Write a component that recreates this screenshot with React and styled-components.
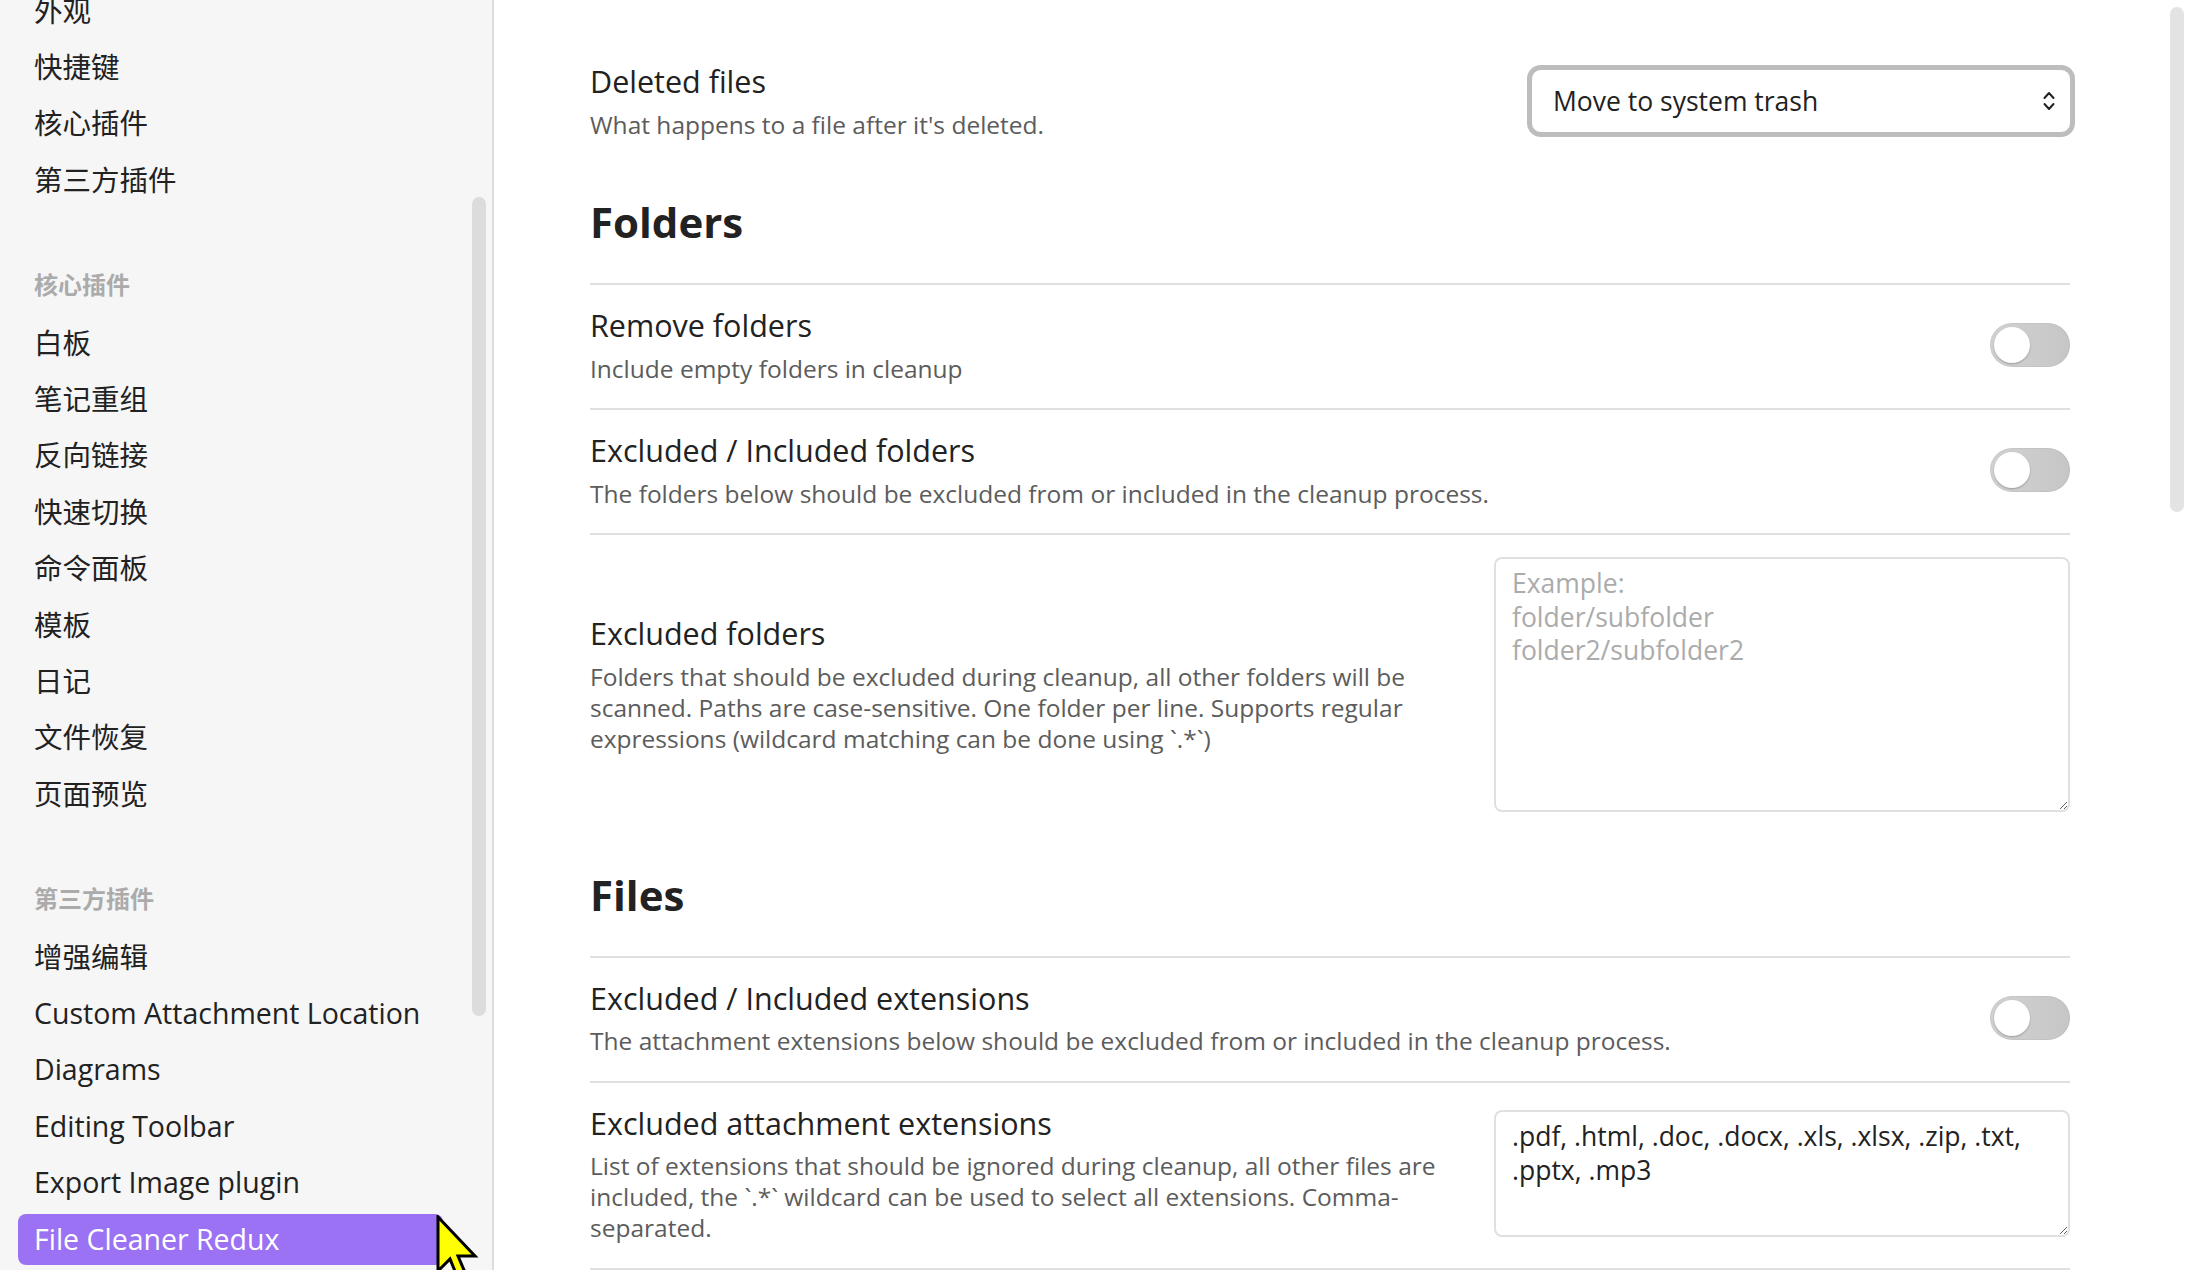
import styled, { createGlobalStyle } from "styled-components";

const GlobalStyle = createGlobalStyle`
  * { box-sizing: border-box; }
  html, body { margin: 0; padding: 0; height: 100%; overflow: hidden; }
  body {
    font-family: "Open Sans", "Noto Sans CJK SC", sans-serif;
    background: #ffffff;
    color: #222222;
  }
  #root { height: 100%; }
`;

const coreItems = ["外观", "快捷键", "核心插件", "第三方插件"];
const corePlugins = ["白板", "笔记重组", "反向链接", "快速切换", "命令面板", "模板", "日记", "文件恢复", "页面预览"];
const communityPlugins = ["增强编辑", "Custom Attachment Location", "Diagrams", "Editing Toolbar", "Export Image plugin", "File Cleaner Redux"];

export default function App() {
    return (
        <Window>
            <GlobalStyle />
            <Sidebar>
                <NavList>
                    {coreItems.map((name) => <NavItem key={name}>{name}</NavItem>)}
                    <GroupHeader>核心插件</GroupHeader>
                    {corePlugins.map((name) => <NavItem key={name}>{name}</NavItem>)}
                    <GroupHeader>第三方插件</GroupHeader>
                    {communityPlugins.map((name) => (
                        <NavItem key={name} $active={name === "File Cleaner Redux"}>{name}</NavItem>
                    ))}
                </NavList>
                <SideThumb />
            </Sidebar>

            <Main>
                <Content>
                    <SettingRow>
                        <Info>
                            <Title>Deleted files</Title>
                            <Desc>What happens to a file after it's deleted.</Desc>
                        </Info>
                        <Select>
                            <span>Move to system trash</span>
                            <svg width="14" height="24" viewBox="0 0 14 24" fill="none" stroke="#222" strokeWidth="2" strokeLinecap="round" strokeLinejoin="round">
                                <path d="M2.5 9 L7 4 L11.5 9" />
                                <path d="M2.5 15 L7 20 L11.5 15" />
                            </svg>
                        </Select>
                    </SettingRow>

                    <Heading>Folders</Heading>

                    <SettingRow $divider>
                        <Info>
                            <Title>Remove folders</Title>
                            <Desc>Include empty folders in cleanup</Desc>
                        </Info>
                        <Toggle><Knob /></Toggle>
                    </SettingRow>

                    <SettingRow $divider>
                        <Info>
                            <Title>Excluded / Included folders</Title>
                            <Desc>The folders below should be excluded from or included in the cleanup process.</Desc>
                        </Info>
                        <Toggle><Knob /></Toggle>
                    </SettingRow>

                    <SettingRow $divider>
                        <Info>
                            <Title>Excluded folders</Title>
                            <Desc>
                                Folders that should be excluded during cleanup, all other folders will be scanned. Paths are case-sensitive. One folder per line. Supports regular expressions (wildcard matching can be done using `.*`)
                            </Desc>
                        </Info>
                        <TextArea
                            $height={255}
                            readOnly
                            placeholder={"Example:\nfolder/subfolder\nfolder2/subfolder2"}
                        />
                    </SettingRow>

                    <Heading>Files</Heading>

                    <SettingRow $divider>
                        <Info>
                            <Title>Excluded / Included extensions</Title>
                            <Desc>The attachment extensions below should be excluded from or included in the cleanup process.</Desc>
                        </Info>
                        <Toggle><Knob /></Toggle>
                    </SettingRow>

                    <SettingRow $divider>
                        <Info>
                            <Title>Excluded attachment extensions</Title>
                            <Desc>
                                List of extensions that should be ignored during cleanup, all other files are included, the `.*` wildcard can be used to select all extensions. Comma-separated.
                            </Desc>
                        </Info>
                        <TextArea
                            $height={127}
                            readOnly
                            defaultValue=".pdf, .html, .doc, .docx, .xls, .xlsx, .zip, .txt, .pptx, .mp3"
                        />
                    </SettingRow>

                    <SettingRow $divider />
                </Content>
                <MainThumb />
            </Main>

            <Cursor width="44" height="70" viewBox="0 0 44 70">
                <path
                    d="M2 2 L2 56 L14 44 L23 66 L31 62 L22 41 L39 41 Z"
                    fill="#ffff00"
                    stroke="#000"
                    strokeWidth="3"
                    strokeLinejoin="miter"
                />
            </Cursor>
        </Window>
    );
}

const Window = styled.div`
    display: flex;
    height: 100vh;
    width: 100vw;
    overflow: hidden;
    position: relative;
`

const Sidebar = styled.aside`
    width: 494px;
    flex-shrink: 0;
    background: #f6f6f6;
    border-right: 2px solid #dddddd;
    position: relative;
    overflow: hidden;
`

const NavList = styled.nav`
    display: flex;
    flex-direction: column;
    margin-top: -14.5px;
`

const NavItem = styled.div`
    margin-left: 18px;
    margin-bottom: 5.4px;
    width: 425px;
    height: 51px;
    padding-left: 16px;
    border-radius: 8px;
    font-size: 28.5px;
    line-height: 51px;
    white-space: nowrap;
    color: ${(p) => (p.$active ? "#ffffff" : "#222222")};
    background: ${(p) => (p.$active ? "#9a72f3" : "transparent")};
`

const GroupHeader = styled.div`
    margin: 59px 0 17.5px 34px;
    font-size: 24px;
    line-height: 30px;
    font-weight: 700;
    color: #ababab;
`

const SideThumb = styled.div`
    position: absolute;
    top: 197px;
    right: 6px;
    width: 14px;
    height: 819px;
    border-radius: 7px;
    background: #dcdcdc;
`

const Main = styled.main`
    flex: 1;
    position: relative;
    background: #ffffff;
    overflow: hidden;
`

const Content = styled.div`
    padding: 39px 117px 0 96px;
`

const SettingRow = styled.div`
    display: flex;
    align-items: center;
    gap: 24px;
    border-top: 2px solid ${(p) => (p.$divider ? "#e0e0e0" : "transparent")};
    padding: 22px 0 24.5px;
`

const Info = styled.div`
    flex: 1;
    min-width: 0;
`

const Title = styled.div`
    font-size: 30.5px;
    line-height: 36px;
    color: #222222;
`

const Desc = styled.div`
    margin-top: 9.5px;
    font-size: 24.5px;
    line-height: 31px;
    color: #5c5c5c;
`

const Heading = styled.h3`
    margin: 0;
    padding: 33px 0 36px;
    font-size: 42px;
    line-height: 50px;
    font-weight: 700;
    color: #222222;
`

const Select = styled.div`
    flex-shrink: 0;
    width: 540px;
    height: 64px;
    margin-right: -1px;
    display: flex;
    align-items: center;
    justify-content: space-between;
    padding: 0 14px 0 21px;
    border: 1px solid #bdbdbd;
    box-shadow: 0 0 0 4px #bdbdbd;
    border-radius: 10px;
    background: #ffffff;
    font-size: 26.5px;
    color: #222222;
`

const Toggle = styled.div`
    flex-shrink: 0;
    width: 80px;
    height: 44px;
    border-radius: 22px;
    display: flex;
    align-items: center;
    padding-left: 4px;
    background: linear-gradient(90deg, #d2d2d2, #c6c6c6);
    box-shadow: inset 0 0 0 1px rgba(0, 0, 0, 0.04);
`

const Knob = styled.div`
    width: 36px;
    height: 36px;
    border-radius: 50%;
    background: #ffffff;
    box-shadow: 0 1px 2px rgba(0, 0, 0, 0.25);
`

const TextArea = styled.textarea`
    flex-shrink: 0;
    width: 576px;
    height: ${(p) => p.$height}px;
    padding: 8px 16px;
    border: 2px solid #e0e0e0;
    border-radius: 8px;
    background: #ffffff;
    font-family: "Open Sans", sans-serif;
    font-size: 26.5px;
    line-height: 33.5px;
    color: #222222;
    outline: none;

    &::placeholder {
        color: #ababab;
    }
`

const MainThumb = styled.div`
    position: absolute;
    top: 7px;
    right: 3px;
    width: 14px;
    height: 505px;
    border-radius: 7px;
    background: #e3e3e3;
`

const Cursor = styled.svg`
    position: absolute;
    left: 436px;
    top: 1215px;
    pointer-events: none;
`
